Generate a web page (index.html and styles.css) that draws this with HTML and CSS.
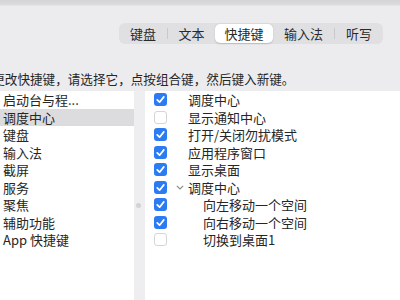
FILE: index.html
```html
<!DOCTYPE html>
<html lang="zh-CN">
<head>
<meta charset="utf-8">
<link rel="stylesheet" href="styles.css">
</head>
<body>
<div class="titlebar"></div>
<div class="tabs-row">
  <div class="seg">
    <div class="tab w48">键盘</div>
    <div class="sep"></div>
    <div class="tab w47">文本</div>
    <div class="tab w58 active">快捷键</div>
    <div class="tab w61">输入法</div>
    <div class="sep"></div>
    <div class="tab w48">听写</div>
  </div>
</div>
<p class="hint">如要更改快捷键，请选择它，点按组合键，然后键入新键。</p>
<div class="panes">
  <ul class="cats">
    <li>启动台与程...</li>
    <li class="sel">调度中心</li>
    <li>键盘</li>
    <li>输入法</li>
    <li>截屏</li>
    <li>服务</li>
    <li>聚焦</li>
    <li>辅助功能</li>
    <li>App 快捷键</li>
  </ul>
  <div class="divider"><span class="dot"></span></div>
  <ul class="items">
    <li><span class="cb on"></span><span class="lbl">调度中心</span></li>
    <li><span class="cb"></span><span class="lbl">显示通知中心</span></li>
    <li><span class="cb on"></span><span class="lbl">打开/关闭勿扰模式</span></li>
    <li><span class="cb on"></span><span class="lbl">应用程序窗口</span></li>
    <li><span class="cb on"></span><span class="lbl">显示桌面</span></li>
    <li><span class="cb on"></span><span class="chev"><svg width="8" height="5" viewBox="0 0 8 5"><path d="M0.8 0.8 L4 4 L7.2 0.8" fill="none" stroke="#8a8a8a" stroke-width="1.1"/></svg></span><span class="lbl grp">调度中心</span></li>
    <li><span class="cb on"></span><span class="lbl sub">向左移动一个空间</span></li>
    <li><span class="cb on"></span><span class="lbl sub">向右移动一个空间</span></li>
    <li><span class="cb"></span><span class="lbl sub">切换到桌面1</span></li>
  </ul>
</div>
</body>
</html>
```

FILE: styles.css
```css
html, body {
  margin: 0;
  padding: 0;
}
body {
  width: 400px;
  height: 300px;
  overflow: hidden;
  background: #ececee;
  font-family: "Noto Sans CJK SC", "Noto Sans", sans-serif;
  font-size: 13px;
  color: #262626;
}
.titlebar {
  height: 5px;
  background: linear-gradient(#d4d4d6, #dcdcde);
  border-bottom: 1px solid #e4e4e6;
}
.tabs-row {
  display: flex;
  justify-content: flex-end;
  padding: 17px 17px 0 0;
}
.seg {
  display: flex;
  align-items: center;
  height: 21px;
  background: #e0e0e3;
  border-radius: 6px;
}
.tab {
  height: 19px;
  line-height: 19px;
  text-align: center;
  color: #2a2a2a;
}
.w48 { width: 48px; }
.w47 { width: 47px; }
.w58 { width: 58px; }
.w61 { width: 61px; }
.tab.active {
  background: #ffffff;
  border-radius: 5px;
  box-shadow: 0 0.5px 1.5px rgba(0,0,0,0.18);
}
.sep {
  width: 1px;
  height: 11px;
  background: #c9c9cc;
}
.hint {
  margin: 0 0 0 -33px;
  height: 25px;
  padding-top: 22px;
  line-height: 25px;
  font-size: 12.6px;
  white-space: nowrap;
  box-sizing: content-box;
}
.panes {
  display: flex;
  height: 209px;
}
ul {
  list-style: none;
  margin: 0;
  padding: 0;
}
.cats {
  width: 134px;
  background: #ffffff;
}
.cats li {
  height: 17.5px;
  line-height: 17.5px;
  padding-left: 3px;
  white-space: nowrap;
}
.cats li.sel {
  background: #dcdcde;
}
.divider {
  width: 11px;
  background: #eeeef0;
  position: relative;
}
.dot {
  position: absolute;
  left: 2px;
  top: 112px;
  width: 5px;
  height: 5px;
  border-radius: 50%;
  background: #d2d2d4;
}
.items {
  flex: 1;
  background: #ffffff;
}
.items li {
  display: flex;
  align-items: center;
  height: 17.5px;
  white-space: nowrap;
}
.cb {
  box-sizing: border-box;
  width: 13px;
  height: 13px;
  margin-left: 9px;
  border-radius: 3px;
  border: 1px solid #d6d6d8;
  background: #ffffff;
  flex: none;
}
.cb.on {
  border: none;
  background: #2b7bf3 url("data:image/svg+xml,%3Csvg xmlns='http://www.w3.org/2000/svg' viewBox='0 0 13 13'%3E%3Cpath d='M3.2 6.8 L5.6 9.2 L9.8 3.9' fill='none' stroke='white' stroke-width='1.7' stroke-linecap='round' stroke-linejoin='round'/%3E%3C/svg%3E") center/13px 13px no-repeat;
}
.lbl {
  margin-left: 21px;
}
.lbl.sub {
  margin-left: 36px;
}
.chev {
  display: flex;
  align-items: center;
  margin-left: 9px;
  width: 8px;
}
.lbl.grp {
  margin-left: 4px;
}
```
